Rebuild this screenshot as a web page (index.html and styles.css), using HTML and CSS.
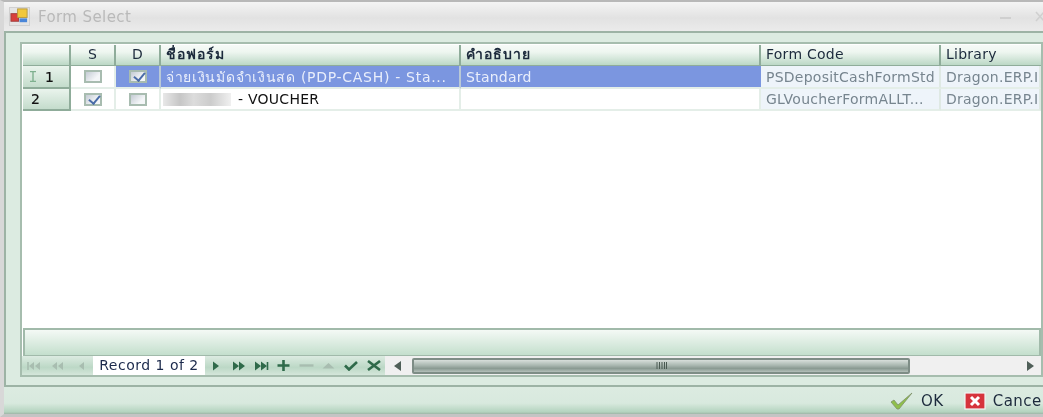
FILE: index.html
```html
<!DOCTYPE html>
<html lang="th">
<head>
<meta charset="utf-8">
<title>Form Select</title>
<link rel="stylesheet" href="styles.css">
</head>
<body>
<div class="window">
  <header class="titlebar">
    <svg class="appicon" width="22" height="20" viewBox="0 0 22 20"><rect x="0.5" y="0.5" width="21" height="19" fill="#e4e4e4" stroke="#cfcfcf"/><rect x="2" y="7" width="8" height="8" fill="#d8403c" stroke="#a04040"/><rect x="9" y="2" width="10" height="9" fill="#f2c83c" stroke="#b89a40"/><rect x="11" y="12" width="8" height="4" fill="#4a86d8"/></svg>
    <span class="title">Form Select</span>
    <span class="winbtn minimize"></span>
    <svg class="winbtn-close" width="10" height="12" viewBox="0 0 10 12"><path d="M1 1 L9 10 M9 1 L1 10" stroke="#d0d0d0" stroke-width="1.6" fill="none"/></svg>
  </header>
  <main class="body">
    <section class="grid">
      <div class="row head">
        <div class="cell c-ind"></div>
        <div class="cell c-chk center">S</div>
        <div class="cell c-chk center">D</div>
        <div class="cell c-name thai">ชื่อฟอร์ม</div>
        <div class="cell c-desc thai">คำอธิบาย</div>
        <div class="cell c-code">Form Code</div>
        <div class="cell c-lib">Library</div>
      </div>
      <div class="row data">
        <div class="cell c-ind ind"><svg class="cursor" width="8" height="11" viewBox="0 0 8 11"><path d="M1 .5H7M1 10.5H7M4 .5V10.5" stroke="#7fb08f" stroke-width="1.4" fill="none"/></svg><b>1</b></div>
        <div class="cell c-chk center plain"><span class="check"></span></div>
        <div class="cell c-chk center sel"><span class="check on"></span></div>
        <div class="cell c-name sel thai-row">จ่ายเงินมัดจำเงินสด (PDP-CASH) - Sta...</div>
        <div class="cell c-desc sel">Standard</div>
        <div class="cell c-code ro">PSDepositCashFormStd</div>
        <div class="cell c-lib ro">Dragon.ERP.Inter</div>
      </div>
      <div class="row data">
        <div class="cell c-ind ind second"><b>2</b></div>
        <div class="cell c-chk center plain"><span class="check on"></span></div>
        <div class="cell c-chk center plain"><span class="check"></span></div>
        <div class="cell c-name plain dark"><span class="redact"></span>- VOUCHER</div>
        <div class="cell c-desc plain"></div>
        <div class="cell c-code ro">GLVoucherFormALLT...</div>
        <div class="cell c-lib ro">Dragon.ERP.Inter</div>
      </div>
      <div class="empty"></div>
      <div class="groupbar"></div>
      <div class="navrow">
        <div class="nav nav-left">
          <svg class="ic" width="16" height="10" viewBox="0 0 16 10"><path d="M2 1V9" stroke="#a8bdb0" stroke-width="1.6"/><path d="M8 1 3 5 8 9ZM14 1 9 5 14 9Z" fill="#a8bdb0"/></svg>
          <svg class="ic" width="13" height="10" viewBox="0 0 13 10"><path d="M6 1 1 5 6 9ZM12 1 7 5 12 9Z" fill="#a8bdb0"/></svg>
          <svg class="ic" width="7" height="10" viewBox="0 0 7 10"><path d="M6 1 1 5 6 9Z" fill="#a8bdb0"/></svg>
        </div>
        <div class="record">Record 1 of 2</div>
        <div class="nav nav-right">
          <svg class="ic" width="8" height="10" viewBox="0 0 8 10"><path d="M1 0.5 7 5 1 9.500Z" fill="#2f6a4a"/></svg>
          <svg class="ic" width="14" height="10" viewBox="0 0 14 10"><path d="M1 0.5 7 5 1 9.500ZM7 0.5 13 5 7 9.500Z" fill="#2f6a4a"/></svg>
          <svg class="ic" width="15" height="10" viewBox="0 0 15 10"><path d="M1 0.5 7 5 1 9.500ZM7 0.5 13 5 7 9.500Z" fill="#2f6a4a"/><path d="M13.500 1V9" stroke="#2f6a4a" stroke-width="1.6"/></svg>
          <svg class="ic" width="13" height="11" viewBox="0 0 13 11"><path d="M6.500 0V11M0.500 5.500H12.500" stroke="#2f6a4a" stroke-width="2.600"/></svg>
          <svg class="ic" width="15" height="11" viewBox="0 0 15 11"><path d="M0.500 5.500H14.500" stroke="#a8bdb0" stroke-width="2.400"/></svg>
          <svg class="ic" width="13" height="10" viewBox="0 0 13 10"><path d="M6.500 2 12.500 7.500H0.500Z" fill="#a8bdb0"/></svg>
          <svg class="ic" width="14" height="11" viewBox="0 0 14 11"><path d="M1 5.500 5 9.500 13 2" stroke="#2f6a4a" stroke-width="2.600" fill="none"/></svg>
          <svg class="ic" width="14" height="11" viewBox="0 0 14 11"><path d="M1 1 13 10M13 1 1 10" stroke="#2f6a4a" stroke-width="2.600" fill="none"/></svg>
        </div>
        <div class="scrollbar">
          <svg class="sb-arrow" width="9" height="12" viewBox="0 0 9 12"><path d="M8 1 1 6 8 11Z" fill="#4f5f58"/></svg>
          <div class="thumb"><svg width="11" height="7" viewBox="0 0 11 7"><path d="M1 0V7M3.500 0V7M6 0V7M8.500 0V7M10.500 0V7" stroke="#4a5a52" stroke-width="1"/></svg></div>
          <svg class="sb-arrow" width="9" height="12" viewBox="0 0 9 12"><path d="M1 1 8 6 1 11Z" fill="#4f5f58"/></svg>
        </div>
      </div>
    </section>
  </main>
  <footer class="footer">
    <span class="btn"><svg width="24" height="18" viewBox="0 0 24 18"><path d="M1 10 L4 8 L8 13 L22 1 L9 17 L7 17 Z" fill="#8fc04a" stroke="#7d8f6a" stroke-width="0.8"/></svg>OK</span>
    <span class="btn cancel"><svg width="22" height="18" viewBox="0 0 22 18"><rect x="1" y="1" width="20" height="16" fill="#d6333c" stroke="#f3f3f3" stroke-width="1.200"/><path d="M7 5 15 13M15 5 7 13" stroke="#fff" stroke-width="3"/></svg>Cancel</span>
  </footer>
</div>
</body>
</html>
```
FILE: styles.css
```css
* { box-sizing: border-box; }
html, body { margin: 0; padding: 0; overflow: hidden; }
body { width: 1043px; height: 417px; background: #c8c8c8; }
.window {
  width: 1043px; height: 417px; overflow: hidden;
  display: flex; flex-direction: column;
  border-top: 2px solid #b8b8b8;
  border-left: 4px solid #d8d8d8;
  border-bottom: 3px solid #c4c4c4;
  background: #dcebe1;
  font-family: "DejaVu Sans", "Noto Sans", sans-serif;
  font-size: 14px; letter-spacing: .25px; color: #1c2a3c;
  filter: blur(0.45px);
}
.titlebar {
  height: 29px; flex: none; display: flex; align-items: center;
  margin-left: -4px; padding-left: 9px;
  background: linear-gradient(#f4f4f4, #e2e2e2 55%, #ebebeb);
}
.appicon { flex: none; width: 21px; height: 19px; }
.title { margin-left: 8px; font-size: 15px; color: #b9b9b9; letter-spacing: .4px; }
.winbtn { display: block; }
.minimize { width: 11px; height: 2px; background: #cfcfcf; margin-left: auto; margin-right: 24px; margin-top: 2px; }
.winbtn-close { margin-right: -2px; }
.body {
  height: 356px; flex: none; padding: 9px 0 8px 14px;
  border: solid #9db3a5; border-width: 2px 0 2px 2px;
  background: #dcebe1;
}
.grid {
  height: 335px; width: 1023px;
  display: flex; flex-direction: column;
  border: 2px solid #a6bdae;
  padding: 1px 0 0 1px;
  background: #fff;
}
.row { display: flex; flex: none; }
.head { height: 21px; }
.data { height: 22.5px; }
.data .cell { padding-top: 1px; }
.cell {
  display: flex; align-items: center; padding-left: 5px;
  white-space: nowrap; overflow: hidden; flex: none;
}
.c-ind { width: 48px; }
.c-chk { width: 45px; }
.c-name { width: 300px; }
.c-desc { width: 300px; }
.c-code { width: 180px; }
.c-lib { flex: 1; min-width: 0; }
.center { justify-content: center; padding-left: 0; }
.thai { font-family: "Noto Sans", "DejaVu Sans", sans-serif; font-weight: 600; letter-spacing: 1px; }
.thai-row { letter-spacing: .7px; }
.head .cell {
  background: linear-gradient(#f6faf7, #eef6f0 35%, #bcd8c6);
  border-right: 2px solid #8fac9a;
  border-bottom: 1px solid #8fac9a;
  padding-bottom: 2px;
}
.head .c-lib { border-right: 0; }
.ind {
  background: linear-gradient(#eaf4ed, #c4dccc);
  border-bottom: 2px solid #8fac9a; border-right: 2px solid #8fac9a;
  padding-left: 6px; gap: 8px;
}
.ind.second { padding-left: 8px; }
.ind b { font-weight: 400; font-size: 14px; color: #111; -webkit-text-stroke: .2px #111; }
.plain { background: #fff; border-right: 2px solid #e4eee8; border-bottom: 2px solid #e4eee8; }
.dark { color: #111; }
.sel { background: #7b96e0; color: #e9eefb; border-right: 2px solid #b9c9d6; border-bottom: 2px solid #e4eee8; }
.c-desc.sel { border-right: 0; }
.ro { background: #eef4fa; color: #77858f; border-right: 2px solid #dfe9e4; border-bottom: 2px solid #e4eee8; }
.check {
  display: block; width: 18px; height: 13px; position: relative;
  border: 2px solid #a8bcb0;
  background: linear-gradient(135deg, #c4cbd4, #f4f6f8 70%);
}
.check.on::after {
  content: ""; position: absolute; left: 5px; top: -2px;
  width: 5px; height: 9px;
  border: solid #4a6ca8; border-width: 0 2px 2px 0;
  transform: rotate(40deg);
}
.redact {
  display: block; width: 68px; height: 13px; margin-right: 7px; margin-left: -3px;
  background: linear-gradient(90deg, #e8e8e8, #c6c6c6 25%, #dcdcdc 45%, #cccccc 70%, #f0f0f0);
}
.empty { flex: 1; background: #fff; }
.groupbar {
  height: 28px; flex: none; margin-right: 0;
  border: 2px solid #a1baaa; border-bottom-width: 1px;
  background: linear-gradient(#f4f9f5, #c4dfcd);
}
.navrow { height: 19px; flex: none; display: flex; align-items: stretch; background: #dcebe1; margin-left: -1px; }
.nav {
  display: grid; align-items: center; justify-items: center; flex: none;
  background: linear-gradient(#dcebe1, #bcd8c6 60%, #d4e6da);
}
.nav-left { width: 71px; grid-template-columns: repeat(3, 1fr); }
.nav-right { width: 180px; grid-template-columns: repeat(8, 1fr); }
.ic { display: block; }
.record { width: 112px; flex: none; background: #fff; text-align: center; line-height: 19px; letter-spacing: .5px; color: #1c2a4c; }
.scrollbar { flex: 1; min-width: 0; display: flex; align-items: center; justify-content: space-between; background: #f0f0f0; padding: 0 6px 0 8px; }
.thumb {
  margin-left: 10px; width: 498px; height: 16px; flex: none; margin-right: auto;
  border: 2px solid #7e8d86; border-radius: 2px;
  background: linear-gradient(#d8dfdb, #a9b7b0 45%, #8a9a92 70%, #b4c0ba);
  display: flex; align-items: center; justify-content: center;
}
.sb-arrow { flex: none; }
.footer {
  flex: 1; display: flex; align-items: center; padding-left: 890px; gap: 20px;
  margin-left: -4px; white-space: nowrap; font-size: 15px; letter-spacing: .5px;
  background: linear-gradient(#dcebe1, #d8e9de 60%, #b4d4bf 92%, #9fb5a7);
}
.btn { display: inline-flex; align-items: center; gap: 7px; color: #1c2a3c; flex: none; }
```
